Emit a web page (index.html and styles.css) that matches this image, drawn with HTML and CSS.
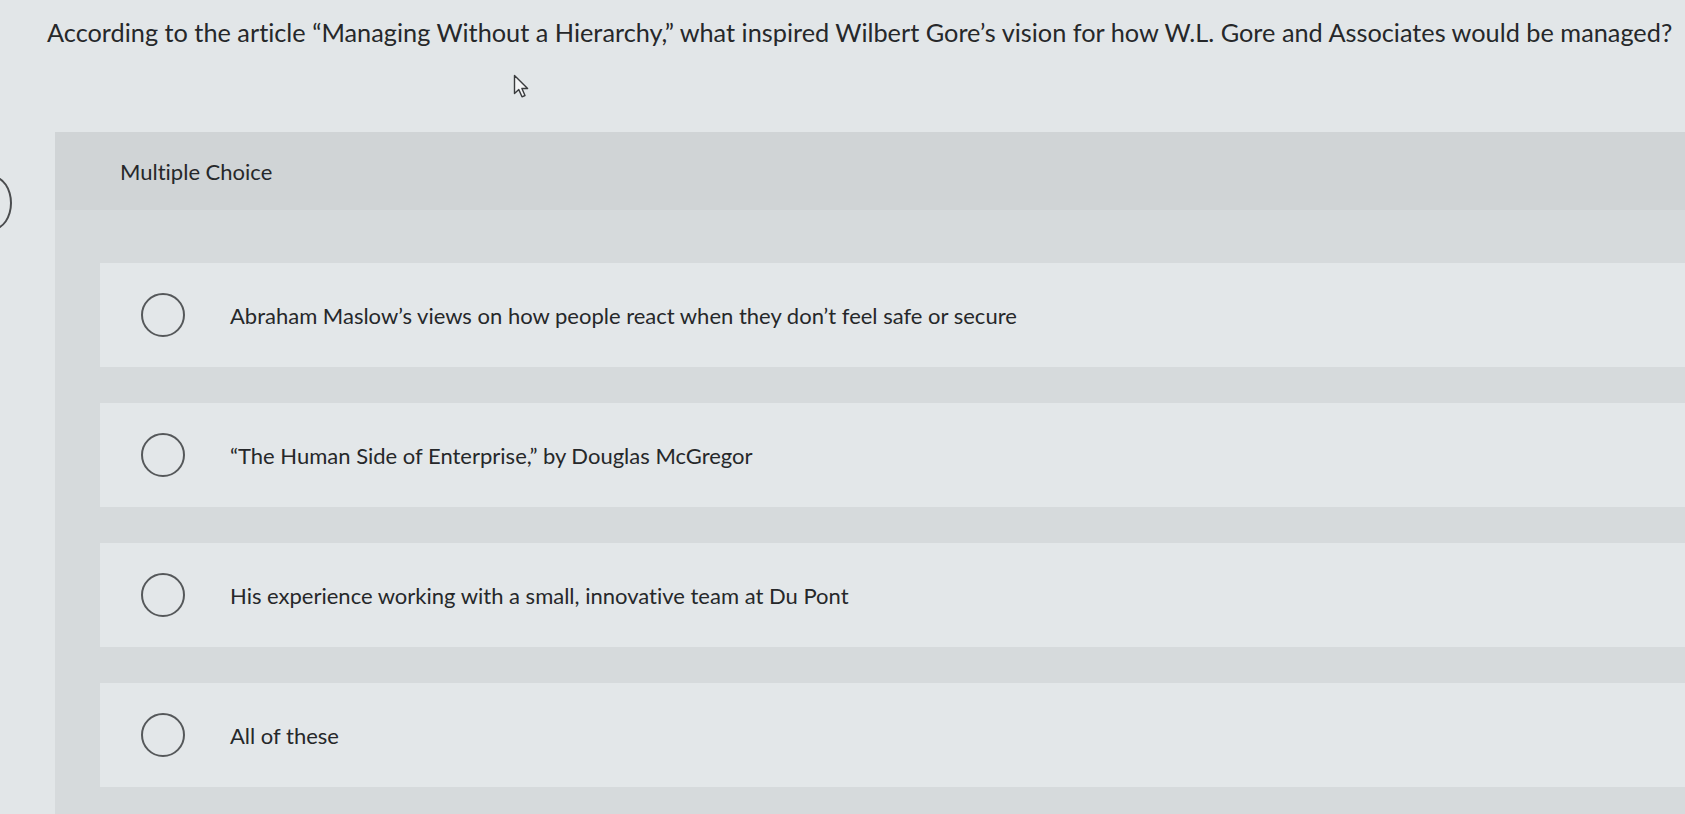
FILE: index.html
```html
<!DOCTYPE html>
<html lang="en">
<head>
    <meta charset="UTF-8">
    <title>Multiple Choice</title>
    <link rel="stylesheet" href="styles.css">
</head>
<body>
    <span class="edge-circle"></span>

    <h1 class="question">According to the article “Managing Without a Hierarchy,” what inspired Wilbert Gore’s vision for how W.L. Gore and Associates would be managed?</h1>

    <svg class="cursor" width="18" height="25" viewBox="0 0 18 25">
        <path d="M1.5 1.5 L1.5 19.5 L5.8 15.6 L9 22.8 L12 21.5 L8.9 14.5 L14.6 14.5 Z" fill="#f4f5f6" stroke="#3a3c3e" stroke-width="1.4" stroke-linejoin="round"/>
    </svg>

    <div class="panel">
        <div class="panel-head">Multiple Choice</div>

        <div class="options">
            <label class="option">
                <span class="radio"></span>
                <span class="option-text">Abraham Maslow’s views on how people react when they don’t feel safe or secure</span>
            </label>
            <label class="option">
                <span class="radio"></span>
                <span class="option-text">“The Human Side of Enterprise,” by Douglas McGregor</span>
            </label>
            <label class="option">
                <span class="radio"></span>
                <span class="option-text">His experience working with a small, innovative team at Du Pont</span>
            </label>
            <label class="option">
                <span class="radio"></span>
                <span class="option-text">All of these</span>
            </label>
        </div>
    </div>
</body>
</html>
```

FILE: styles.css
```css
body{
    margin: 0;
    background-color: #e2e6e8;
    font-family: Lato, "Open Sans", sans-serif;
    font-variant-ligatures: none;
    color: #26282a;
    overflow: hidden;
    position: relative;
    height: 814px;
}
.question{
    margin: 0;
    padding: 15px 0 0 47px;
    font-size: 25.3px;
    font-weight: 400;
    line-height: 34px;
    white-space: nowrap;
}
.cursor{
    position: absolute;
    left: 513px;
    top: 74px;
}
.edge-circle{
    position: absolute;
    left: -26px;
    top: 176px;
    width: 34px;
    height: 50px;
    border: 2px solid #4a4c4e;
    border-radius: 50%;
}
.panel{
    margin: 83px 0 0 55px;
    background-color: #d6dadc;
    height: 700px;
}
.panel-head{
    height: 78px;
    display: flex;
    align-items: center;
    padding-left: 65px;
    background-color: #d0d4d6;
    font-size: 22px;
}
.options{
    display: flex;
    flex-direction: column;
    gap: 36px;
    padding: 53px 0 30px 45px;
}
.option{
    height: 104px;
    display: flex;
    align-items: center;
    padding-left: 41px;
    background-color: #e3e7e9;
    font-size: 22px;
    cursor: pointer;
}
.radio{
    width: 40px;
    height: 40px;
    border: 2px solid #55585a;
    border-radius: 50%;
    flex-shrink: 0;
}
.option-text{
    margin-left: 45px;
}
```
